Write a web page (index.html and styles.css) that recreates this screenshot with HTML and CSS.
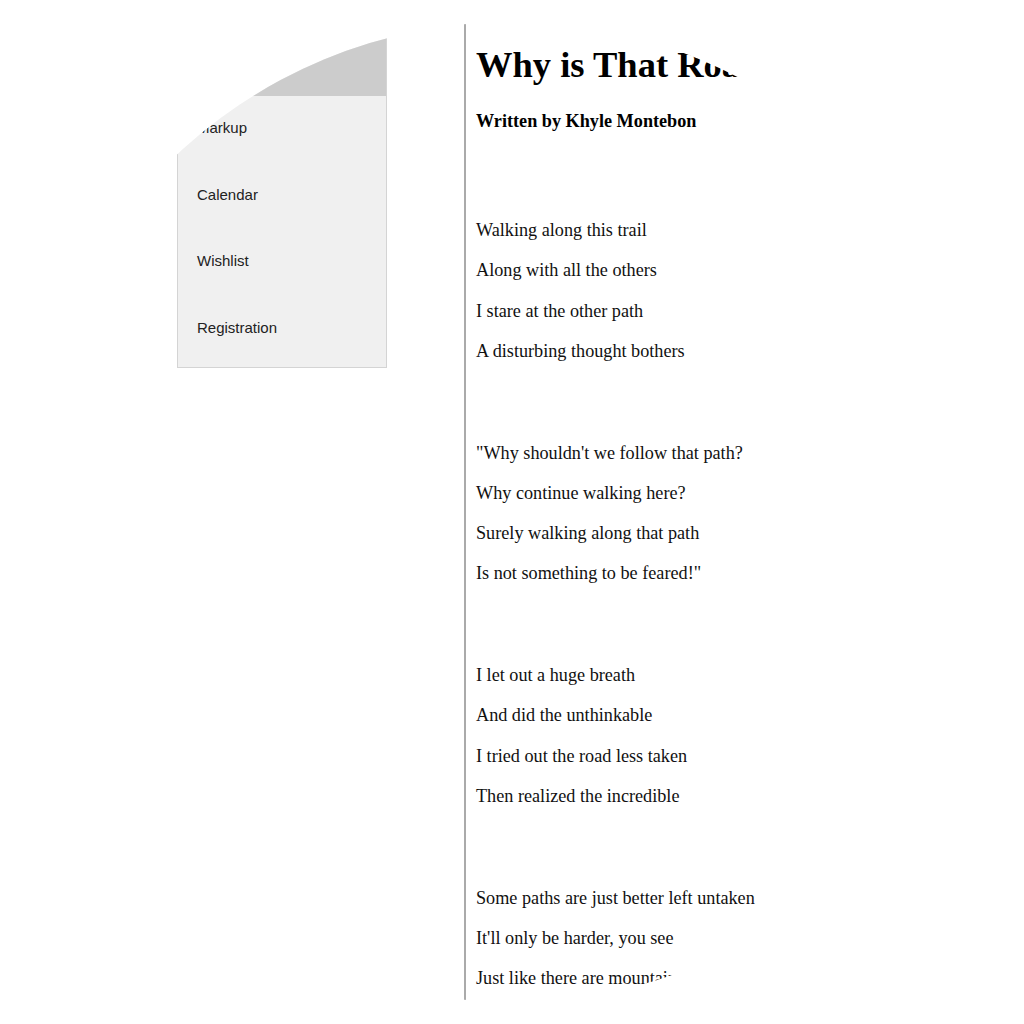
FILE: index.html
```html
<!DOCTYPE html>
<html>
<head>
<meta charset="utf-8">
<title>Why is That Road Less Taken</title>
<link rel="stylesheet" href="styles.css">
</head>
<body>
<div class="screen">
  <div class="page">
    <nav class="sidebar">
      <div class="sidebar-head"></div>
      <ul class="menu">
        <li>Markup</li>
        <li>Calendar</li>
        <li>Wishlist</li>
        <li>Registration</li>
      </ul>
    </nav>
    <main class="content">
      <h1 class="title">Why is That Road Less Taken?</h1>
      <h4 class="byline">Written by Khyle Montebon</h4>
      <div class="poem">
        <div class="stanza">
          <p>Walking along this trail</p>
          <p>Along with all the others</p>
          <p>I stare at the other path</p>
          <p>A disturbing thought bothers</p>
        </div>
        <div class="stanza">
          <p>"Why shouldn't we follow that path?</p>
          <p>Why continue walking here?</p>
          <p>Surely walking along that path</p>
          <p>Is not something to be feared!"</p>
        </div>
        <div class="stanza">
          <p>I let out a huge breath</p>
          <p>And did the unthinkable</p>
          <p>I tried out the road less taken</p>
          <p>Then realized the incredible</p>
        </div>
        <div class="stanza">
          <p>Some paths are just better left untaken</p>
          <p>It'll only be harder, you see</p>
          <p>Just like there are mountains</p>
        </div>
      </div>
    </main>
  </div>
</div>
</body>
</html>
```
FILE: styles.css
```css
html, body {
  margin: 0;
  padding: 0;
  background: #ffffff;
}

.screen {
  width: 1024px;
  height: 1024px;
  overflow: hidden;
  background: #ffffff;
  clip-path: circle(490px at 512px 512px);
}

.page {
  display: flex;
  align-items: flex-start;
  padding-left: 177px;
}

.sidebar {
  width: 208px;
  margin-top: 10px;
  margin-right: 77px;
  background: #f0f0f0;
  border: 1px solid #d4d4d4;
  border-top: none;
  font-family: "Liberation Sans", Arial, sans-serif;
  font-size: 15px;
  color: #222222;
}

.sidebar-head {
  height: 86px;
  background: #cccccc;
}

.menu {
  list-style: none;
  margin: 0;
  padding: 0 0 4px 0;
}

.menu li {
  line-height: 17px;
  padding: 23px 19px 26.7px 19px;
}

.content {
  border-left: 2px solid #aaaaaa;
  padding-left: 10px;
  min-height: 1100px;
  font-family: "Liberation Serif", "Times New Roman", serif;
  color: #111111;
}

.title {
  font-size: 36.5px;
  line-height: 42px;
  font-weight: bold;
  margin: 44px 0 0 0;
  color: #000000;
  white-space: nowrap;
}

.byline {
  font-size: 18.2px;
  line-height: 22px;
  font-weight: bold;
  margin: 24px 0 0 0;
  color: #000000;
}

.poem {
  display: flex;
  flex-direction: column;
  gap: 79.7px;
  margin-top: 87px;
}

.stanza {
  display: flex;
  flex-direction: column;
  gap: 18.3px;
}

.stanza p {
  margin: 0;
  font-size: 18.2px;
  line-height: 22px;
}
```
